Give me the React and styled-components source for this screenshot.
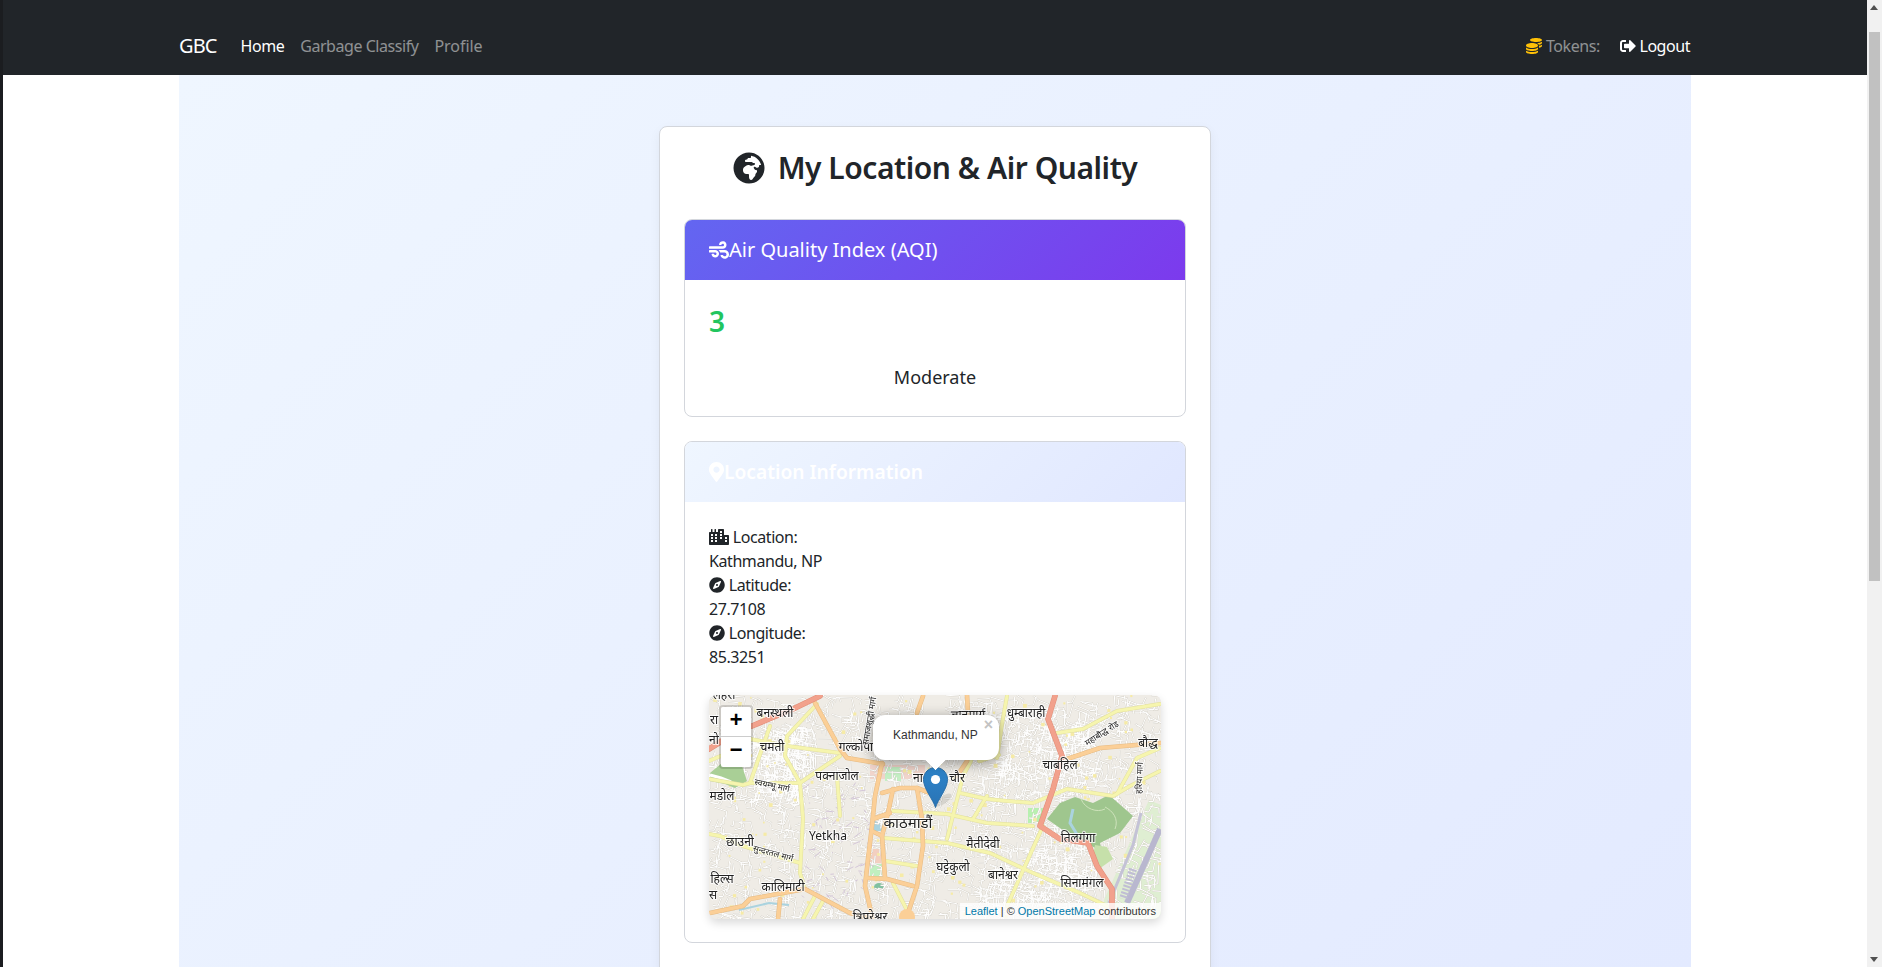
import React from 'react'
import styled, { createGlobalStyle } from 'styled-components'
import { FaCity, FaCoins, FaCompass, FaGlobeAfrica, FaMapMarkerAlt, FaSignOutAlt, FaWind } from 'react-icons/fa'

const GlobalStyle = createGlobalStyle`
  html, body {
    margin: 0;
    height: 100%;
    overflow: hidden;
    background: #fff;
  }
  body {
    font-family: "Noto Sans", "Open Sans", sans-serif;
    font-size: 16px;
    line-height: 24px;
    color: #212529;
  }
  * { box-sizing: border-box; }
`

const Shell = styled.div`
  display: flex;
  height: 967px;
  overflow: hidden;
`

const WindowEdge = styled.div`
  flex: 0 0 3px;
  background: #1b1d20;
`

const Page = styled.div`
  flex: 1;
  min-width: 0;
`

const Navbar = styled.nav`
  height: 75px;
  padding: 17px 177px 0 176px;
  background: #212529;
  display: flex;
  align-items: center;
  justify-content: space-between;
`

const NavGroup = styled.div`
  display: flex;
  align-items: center;
`

const Brand = styled.span`
  font-size: 20px;
  color: #fff;
  margin-right: 16px;
  letter-spacing: -0.9px;
`

const NavLink = styled.span`
  padding: 0 8px;
  color: ${p => (p.$active ? '#fff' : 'rgba(255,255,255,.5)')};
  letter-spacing: ${p => p.$spacing || '-0.45px'};
  white-space: nowrap;
  svg { vertical-align: -2px; }
`

const TokensLink = styled(NavLink)`
  padding-right: 12px;
`

const LogoutLink = styled(NavLink)`
  padding-right: 0;
`

const CoinIcon = styled(FaCoins)`
  color: #ffc107;
`

const Content = styled.main`
  margin: 0 176px;
  height: 1500px;
  padding-top: 51px;
  background: linear-gradient(135deg, #eff6ff, #e0e7ff);
`

const Panel = styled.section`
  width: 552px;
  margin: 0 auto;
  height: 1300px;
  padding: 24px;
  background: #fff;
  border: 1px solid #d3d6dc;
  border-radius: 8px;
  box-shadow: 0 4px 12px rgba(0, 0, 0, .05);
`

const Title = styled.h2`
  margin: 0 0 28px;
  height: 40px;
  font-size: 30px;
  line-height: 34px;
  font-weight: 600;
  letter-spacing: -0.46px;
  text-align: center;
  white-space: nowrap;
  svg {
    font-size: 32px;
    margin-right: 13px;
    vertical-align: -5px;
  }
`

const Card = styled.div`
  border: 1px solid #d3d6dc;
  border-radius: 8px;
  overflow: hidden;
  background: #fff;
  margin-bottom: 24px;
`

const CardHeader = styled.div`
  height: 60px;
  padding: 0 24px;
  display: flex;
  align-items: center;
  color: #fff;
  font-size: ${p => (p.$strong ? '19.2px' : '20px')};
  font-weight: ${p => (p.$strong ? 600 : 400)};
  background: ${p => (p.$light
    ? 'linear-gradient(135deg, #eff6ff, #e0e7ff)'
    : 'linear-gradient(135deg, #6366f1, #7c3aed)')};
`

const WindIcon = styled(FaWind)`
  width: 20px;
  height: 20px;
`

const PinIcon = styled(FaMapMarkerAlt)`
  width: 15px;
  height: 20px;
`

const CityIcon = styled(FaCity)`
  width: 20px;
  height: 16px;
`

const AqiBody = styled.div`
  height: 136px;
  padding: 24px 24px 0;
`

const AqiValue = styled.div`
  font-size: 28px;
  line-height: 34px;
  font-weight: 600;
  color: #22c55e;
`

const AqiLabel = styled.div`
  font-size: 18px;
  line-height: 27px;
  text-align: center;
  margin-top: 26px;
`

const LocationBody = styled.div`
  padding: 23px 24px 23px;
`

const InfoLine = styled.div`
  height: 24px;
  letter-spacing: -0.42px;
  svg { vertical-align: -2px; }
`

const MapBox = styled.div`
  position: relative;
  height: 224px;
  width: 452px;
  margin-top: 26px;
  border-radius: 8px;
  overflow: hidden;
  background: #efece6;
  box-shadow: 0 4px 10px rgba(0, 0, 0, .15);
  font-family: "Liberation Sans", Arial, sans-serif;
`

const MapSvg = styled.svg`
  display: block;
  filter: blur(0.25px);
`

const MapLabel = styled.text`
  font-family: "Noto Sans Devanagari", "Noto Sans", "Lohit Devanagari", sans-serif;
  fill: #222;
  stroke: rgba(255, 255, 255, .8);
  stroke-width: 2px;
  paint-order: stroke;
  text-anchor: middle;
  dominant-baseline: middle;
`

const ZoomBar = styled.div`
  position: absolute;
  left: 10px;
  top: 10px;
  border: 2px solid rgba(0, 0, 0, .15);
  border-radius: 4px;
  background-clip: padding-box;
`

const ZoomButton = styled.div`
  width: 30px;
  height: 30px;
  background: #fff;
  color: #000;
  font: bold 22px/30px "Liberation Mono", monospace;
  text-align: center;
  border-bottom: ${p => (p.$last ? 'none' : '1px solid #ccc')};
  border-radius: ${p => (p.$last ? '0 0 2px 2px' : '2px 2px 0 0')};
`

const Popup = styled.div`
  position: absolute;
  left: 164px;
  top: 20px;
  width: 126px;
  height: 45px;
  padding: 12px 0 0 20px;
  background: #fff;
  border-radius: 12px;
  color: #333;
  font-size: 12px;
  line-height: 17px;
  white-space: nowrap;
  box-shadow: 0 3px 14px rgba(0, 0, 0, .4);
`

const PopupTip = styled.div`
  position: absolute;
  left: 54px;
  top: 35px;
  width: 17px;
  height: 17px;
  background: #fff;
  transform: rotate(45deg);
  clip-path: polygon(100% 0, 100% 100%, 0 100%);
`

const PopupClose = styled.span`
  position: absolute;
  top: 1px;
  right: 6px;
  color: #c3c3c3;
  font: bold 16px/18px "Liberation Sans", sans-serif;
`

const MarkerSvg = styled.svg`
  position: absolute;
  left: 214px;
  top: 72px;
  overflow: visible;
`

const Attribution = styled.div`
  position: absolute;
  right: 0;
  bottom: 0;
  padding: 0 5px;
  height: 16px;
  font-size: 11px;
  line-height: 16px;
  color: #333;
  white-space: nowrap;
  background: rgba(255, 255, 255, .8);
`

const AttributionLink = styled.span`
  color: #0078a8;
`

const Scrollbar = styled.div`
  flex: 0 0 15px;
  display: flex;
  flex-direction: column;
  align-items: center;
  background: #f1f1f1;
  position: relative;
`

const ScrollArrow = styled.div`
  position: absolute;
  left: 3px;
  ${p => (p.$down ? 'bottom: 5px;' : 'top: 5px;')}
  width: 0;
  height: 0;
  border-left: 4.5px solid transparent;
  border-right: 4.5px solid transparent;
  ${p => (p.$down ? 'border-top: 5px solid #505050;' : 'border-bottom: 5px solid #505050;')}
`

const ScrollThumb = styled.div`
  width: 11px;
  height: 549px;
  margin-top: 32px;
  background: #c1c1c1;
`

// small seeded random so the street pattern stays the same on every render
function seeded(seed) {
  let s = seed
  return () => {
    s = (s * 16807) % 2147483647
    return (s - 1) / 2147483646
  }
}

function buildStreets() {
  const rnd = seeded(4242)
  const lines = []
  const dots = []
  const purple = []
  const addLine = (x, y) => {
    const angle = (rnd() < 0.5 ? 0.25 : 1.75) + (rnd() - 0.5) * 0.7
    const len = 5 + rnd() * 11
    const mx = x + Math.cos(angle) * len
    const my = y + Math.sin(angle) * len
    const ex = mx + Math.cos(angle + 1.3) * len * 0.6
    const ey = my + Math.sin(angle + 1.3) * len * 0.6
    lines.push(`M${x.toFixed(1)} ${y.toFixed(1)}L${mx.toFixed(1)} ${my.toFixed(1)}L${ex.toFixed(1)} ${ey.toFixed(1)}`)
  }
  for (let i = 0; i < 1500; i++) addLine(rnd() * 452, rnd() * 224)
  // the denser old quarters
  for (let i = 0; i < 220; i++) addLine(45 + rnd() * 50, 30 + rnd() * 70)
  for (let i = 0; i < 220; i++) addLine(280 + rnd() * 100, 10 + rnd() * 90)
  for (let i = 0; i < 220; i++) addLine(270 + rnd() * 110, 135 + rnd() * 70)
  for (let i = 0; i < 170; i++) {
    dots.push([rnd() * 452, rnd() * 224, 1.5 + rnd() * 2.5])
  }
  for (let i = 0; i < 70; i++) {
    const x = 90 + rnd() * 70
    const y = 90 + rnd() * 120
    purple.push(`M${x.toFixed(1)} ${y.toFixed(1)}l${(rnd() * 8).toFixed(1)} ${(rnd() * 10 - 5).toFixed(1)}`)
  }
  return { lines: lines.join(''), dots, purple: purple.join('') }
}

const streets = buildStreets()

const yellowRoads = [
  '108,9 78,41 76,61 91,88 94,124 91,178 96,194',
  '61,31 41,88',
  '41,44 78,51 131,58',
  '0,66 14,60',
  '0,84 34,90 41,88 91,88',
  '131,61 101,81 91,88',
  '128,81 131,121',
  '184,116 238,119 278,128 324,131',
  '174,143 238,148 281,158 324,178 371,198 398,211',
  '0,139 11,141 34,151 91,168',
  '176,166 208,171',
  '238,144 254,81 262,66',
  '334,131 298,211',
  '251,98 278,104 298,106 324,108 358,94 404,101 421,91 451,76',
  '278,101 264,124',
  '298,1 293,29 288,63',
  '348,38 374,34 408,16 451,9',
  '408,99 428,63 451,53',
  '184,188 201,221',
  '94,224 106,201',
  '104,224 114,206',
  '270,66 290,60'
]

const orangeRoads = [
  '173,68 166,101 163,131 159,164 156,191 163,221',
  '184,94 179,118 173,141 176,183',
  '208,93 213,124 214,151 208,191 198,221',
  '164,124 181,118',
  '173,98 191,93 208,93 221,98',
  '159,183 178,184 204,191',
  '163,136 173,141',
  '106,8 131,54 138,63 174,69',
  '214,1 208,18',
  '258,0 259,18',
  '258,66 248,81',
  '1,218 34,211 41,204 74,198 96,194 141,218 164,224',
  '71,204 69,224',
  '358,64 391,53 451,48'
]

const salmonRoads = [
  '111,1 84,14 43,31',
  '0,54 13,46',
  '346,1 339,24 353,61 344,94 331,131 351,144 379,148 388,171 403,194 403,224'
]

const labels = [
  ['बनस्थली', 66, 19, 12],
  ['धुम्बाराही', 317, 19, 12],
  ['गल्कोपा', 147, 53, 12],
  ['चमती', 63, 53, 12],
  ['पक्नाजोल', 128, 82, 12],
  ['चाबहिल', 351, 71, 12],
  ['बौद्ध', 439, 49, 12],
  ['काठमाडौं', 199, 129, 15],
  ['Yetkha', 119, 142, 12],
  ['छाउनी', 31, 148, 12],
  ['मैतीदेवी', 274, 150, 12],
  ['तिलगंगा', 369, 144, 12],
  ['घट्टेकुलो', 244, 173, 12],
  ['बानेश्वर', 294, 181, 12],
  ['सिनामंगल', 373, 189, 12],
  ['कालिमाटी', 74, 193, 12],
  ['हिल्स', 13, 185, 12],
  ['मडोल', 13, 102, 12],
  ['चौर', 248, 84, 12],
  ['ना', 209, 84, 12],
  ['त्रिपुरेश्वर', 161, 223, 12],
  ['लहरा', 15, 1, 12],
  ['रा', 5, 26, 12],
  ['नो', 5, 46, 12],
  ['स', 4, 201, 12],
  ['ज्ञानमार्ग', 259, 21, 12],
  ['स्वयम्भू मार्ग', 63, 91, 8.5, 12],
  ['सुन्दरतल मार्ग', 64, 159, 8.5, 15],
  ['समाजशुद्धी मार्ग', 161, 26, 8.5, -80],
  ['महाबौद्ध रोड', 393, 39, 8.5, -33],
  ['हरिया मार्ग', 431, 83, 8.5, -88]
]

const PARK = '338,124 351,108 366,102 384,108 400,100 424,121 411,138 391,148 393,156 380,150 358,138'

function RoadGroup({ roads, fill, casing, width }) {
  return (
    <g fill="none" strokeLinecap="round" strokeLinejoin="round">
      {roads.map((r, i) => <polyline key={i} points={r} stroke={casing} strokeWidth={width + 1} />)}
      {roads.map((r, i) => <polyline key={i} points={r} stroke={fill} strokeWidth={width} />)}
    </g>
  )
}

function MapTiles() {
  return (
    <MapSvg width="452" height="224" viewBox="0 0 452 224">
      <rect width="452" height="224" fill="#efece6" />
      <polygon points="440,105 452,110 452,224 395,224 395,205" fill="#dfeed2" />
      <rect x="161" y="70" width="55" height="14" fill="#f2d5cc" />
      <rect x="161" y="154" width="11" height="14" fill="#f3cfc0" />
      <rect x="161" y="169" width="12" height="14" fill="#c0f0c0" />
      <rect x="319" y="113" width="15" height="15" fill="#b8f0b0" />
      <rect x="176" y="72" width="16" height="14" fill="#c4f0c4" />
      <rect x="165" y="126" width="9" height="10" fill="#aad3df" />
      <ellipse cx="170" cy="192" rx="5" ry="4" fill="#80c0a0" />
      <path d={streets.lines} fill="none" stroke="#d0ccc2" strokeWidth="1.6" />
      <path d={streets.lines} fill="none" stroke="#fff" strokeWidth="1" />
      <path d={streets.purple} fill="none" stroke="#cdbcd4" strokeWidth="0.8" />
      {streets.dots.map(([x, y, s], i) => <rect key={i} x={x} y={y} width={s} height={s} fill="#f6eba6" />)}
      <polygon points="1,78 13,68 33,71 38,86 26,93 16,89 1,86" fill="#a9cf96" />
      <polygon points={PARK} fill="#9fc68e" />
      <polygon points="386,150 398,152 404,164 390,174 383,166" fill="#c6e0aa" />
      <path d="M396 112c8 4 14 12 10 22M372 104c4 10 16 14 24 10" fill="none" stroke="#cfe3bc" strokeWidth="1" />
      <polyline points="1,80 12,83 22,87" fill="none" stroke="#fff" strokeWidth="3" />
      <polyline points="364,114 361,128 369,141" fill="none" stroke="#aad3df" strokeWidth="3" />
      <polyline points="30,215 60,208 80,210" fill="none" stroke="#aad3df" strokeWidth="2" />
      <polyline points="451,134 418,208" stroke="#b9b7cf" strokeWidth="6" fill="none" />
      <polyline points="432,118 424,150 400,208" stroke="#c4c2d6" strokeWidth="3" fill="none" />
      <polyline points="424,174 414,204" stroke="#c0bed4" strokeWidth="8" strokeDasharray="2 1.5" fill="none" />
      <RoadGroup roads={yellowRoads} fill="#f6f5ae" casing="#e2dfa0" width={3} />
      <RoadGroup roads={orangeRoads} fill="#fbcf97" casing="#e6bb84" width={3.6} />
      <RoadGroup roads={salmonRoads} fill="#f2a18c" casing="#e08d78" width={4.6} />
      <circle cx="198" cy="222" r="8" fill="#fbcf97" />
      {labels.map(([t, x, y, size, rot]) => (
        <MapLabel key={t} x={x} y={y} fontSize={size} transform={rot ? `rotate(${rot} ${x} ${y})` : undefined}>{t}</MapLabel>
      ))}
    </MapSvg>
  )
}

function Marker() {
  return (
    <MarkerSvg width="25" height="41" viewBox="0 0 25 41">
      <defs>
        <linearGradient id="pin" x1="0" y1="0" x2="0" y2="1">
          <stop offset="0" stopColor="#2e85cb" />
          <stop offset="1" stopColor="#2a73b4" />
        </linearGradient>
      </defs>
      <ellipse cx="20" cy="33" rx="10" ry="4" transform="rotate(-35 20 33)" fill="rgba(0,0,0,.1)" />
      <path d="M12.5 40.5 C10.5 33 .5 22 .5 12.5 C.5 5.5 6 .5 12.5 .5 C19 .5 24.5 5.5 24.5 12.5 C24.5 22 14.5 33 12.5 40.5 Z" fill="url(#pin)" stroke="#2a6fa8" strokeWidth="1" />
      <circle cx="12.5" cy="12.5" r="4.6" fill="#fff" />
    </MarkerSvg>
  )
}

export default function App() {
  return (
    <Shell>
      <GlobalStyle />
      <WindowEdge />
      <Page>
        <Navbar>
          <NavGroup>
            <Brand>GBC</Brand>
            <NavLink $active>Home</NavLink>
            <NavLink>Garbage Classify</NavLink>
            <NavLink $spacing="-0.05px">Profile</NavLink>
          </NavGroup>
          <NavGroup>
            <TokensLink><CoinIcon /> Tokens:</TokensLink>
            <LogoutLink $active><FaSignOutAlt /> Logout</LogoutLink>
          </NavGroup>
        </Navbar>
        <Content>
          <Panel>
            <Title><FaGlobeAfrica />My Location &amp; Air Quality</Title>
            <Card>
              <CardHeader><WindIcon />Air Quality Index (AQI)</CardHeader>
              <AqiBody>
                <AqiValue>3</AqiValue>
                <AqiLabel>Moderate</AqiLabel>
              </AqiBody>
            </Card>
            <Card>
              <CardHeader $light $strong><PinIcon />Location Information</CardHeader>
              <LocationBody>
                <InfoLine><CityIcon /> Location:</InfoLine>
                <InfoLine>Kathmandu, NP</InfoLine>
                <InfoLine><FaCompass /> Latitude:</InfoLine>
                <InfoLine>27.7108</InfoLine>
                <InfoLine><FaCompass /> Longitude:</InfoLine>
                <InfoLine>85.3251</InfoLine>
                <MapBox>
                  <MapTiles />
                  <ZoomBar>
                    <ZoomButton>+</ZoomButton>
                    <ZoomButton $last>−</ZoomButton>
                  </ZoomBar>
                  <Marker />
                  <Popup>
                    Kathmandu, NP
                    <PopupClose>×</PopupClose>
                    <PopupTip />
                  </Popup>
                  <Attribution>
                    <AttributionLink>Leaflet</AttributionLink> | © <AttributionLink>OpenStreetMap</AttributionLink> contributors
                  </Attribution>
                </MapBox>
              </LocationBody>
            </Card>
          </Panel>
        </Content>
      </Page>
      <Scrollbar>
        <ScrollArrow />
        <ScrollThumb />
        <ScrollArrow $down />
      </Scrollbar>
    </Shell>
  )
}
